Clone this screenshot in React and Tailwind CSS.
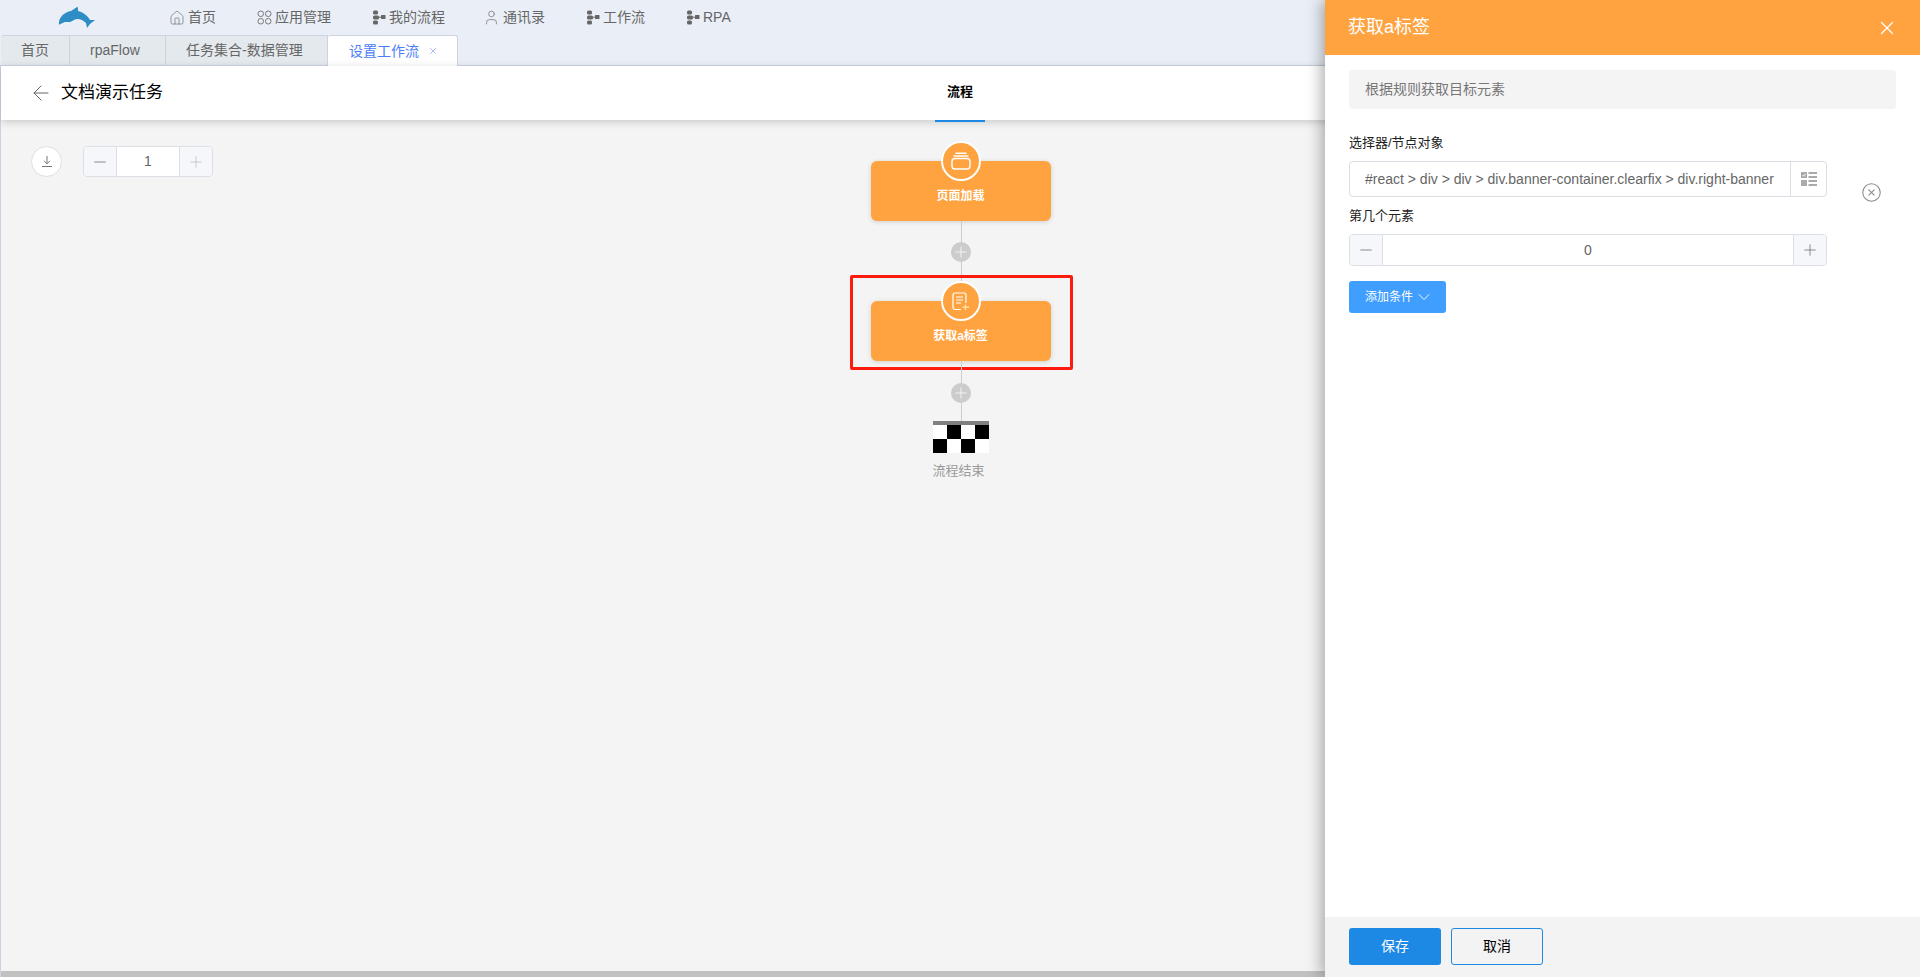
import React from "react";
import { House, User, ArrowLeft, X, Minus, Plus, CircleX, ChevronDown } from "lucide-react";

const FONT = { fontFamily: '"Liberation Sans", "Noto Sans CJK SC", sans-serif' };

function FlowIcon() {
  return (
    <svg width="14" height="15" viewBox="0 0 14 15" fill="#666">
      <rect x="1" y="0.5" width="5" height="4" rx="1.5" />
      <rect x="1" y="5.5" width="6" height="4" rx="1.5" />
      <rect x="1" y="10.5" width="5" height="4" rx="1.5" />
      <rect x="9" y="5" width="4.5" height="4" rx="0.5" />
      <path d="M7 7.2h2" stroke="#666" strokeWidth="1" fill="none" />
    </svg>
  );
}

function AppsIcon() {
  return (
    <svg width="15" height="15" viewBox="0 0 15 15" fill="none" stroke="#777" strokeWidth="1">
      <rect x="1" y="1" width="5.5" height="5.5" rx="2.6" />
      <rect x="8.5" y="1" width="5.5" height="5.5" rx="2.6" />
      <rect x="1" y="8.5" width="5.5" height="5.5" rx="2.6" />
      <rect x="8.5" y="8.5" width="5.5" height="5.5" rx="2.6" />
    </svg>
  );
}

function Dolphin() {
  return (
    <svg width="38" height="23" viewBox="0 0 38 23">
      <path d="M1 19C0 12 6 6 13 5L19 1C20 0 20 3 20 5C25 6 30 10 32 14L37 14L32 18L29 22L28 17C24 13 19 12 16 14C14 16 11 17 9 16C6 16 3 18 1 19Z" fill="#2f8dc5" />
      <path d="M1 19C4 17 7 15.5 10 16C12 16.5 14 15.5 16 14C15 16.5 13 18 9 18C6 18 3 19 1 19Z" fill="#eaf2f5" />
    </svg>
  );
}

function PageIcon() {
  return (
    <svg width="20" height="18" viewBox="0 0 20 18" fill="none" stroke="#fff" strokeWidth="1.4">
      <rect x="1" y="6.5" width="18" height="10.5" rx="3" />
      <path d="M2.5 4h15M4.5 1.2h11" />
    </svg>
  );
}

function NoteIcon() {
  return (
    <svg width="18" height="19" viewBox="0 0 18 19" fill="none" stroke="#fff" strokeWidth="1.2">
      <path d="M9 17.5H3a2 2 0 0 1-2-2V3a2 2 0 0 1 2-2h9a2 2 0 0 1 2 2v8" />
      <path d="M4 5h7M4 8h7M4 11h5" />
      <path d="M13.5 12.5v5.5M10.5 15.2h6.5" stroke="#ffe9b0" />
    </svg>
  );
}

function PickIcon() {
  return (
    <svg width="16" height="14" viewBox="0 0 16 14" fill="#aaa">
      <rect x="0" y="0" width="6" height="6" />
      <path d="M1.5 3l1.2 1.2L4.6 1.8" stroke="#fff" strokeWidth="0.9" fill="none" />
      <rect x="0" y="8" width="6" height="6" />
      <rect x="7.5" y="0" width="8.5" height="2" />
      <rect x="7.5" y="4" width="8.5" height="2" />
      <rect x="7.5" y="8" width="8.5" height="2" />
      <rect x="7.5" y="12" width="8.5" height="2" />
    </svg>
  );
}

function DownloadIcon() {
  return (
    <svg width="10" height="11" viewBox="0 0 10 11" fill="none" stroke="#777" strokeWidth="1">
      <path d="M5 0v7.5M2 4.8l3 3 3-3M0 10.5h10" />
    </svg>
  );
}

function FlowNode({ icon, title }) {
  return (
    <div className="relative w-[180px] h-[60px] bg-[#ffa340] rounded-[6px] shadow-[0_1px_5px_rgba(0,0,0,0.15)] text-center">
      <div className="absolute left-[70px] top-[-20px] w-10 h-10 rounded-full bg-[#ffa340] border-2 border-white flex items-center justify-center">
        {icon}
      </div>
      <div className="pt-[26px] text-white text-[12px] font-bold leading-[18px]">{title}</div>
    </div>
  );
}

function Connector({ className, dotClass }) {
  return (
    <div className={`relative w-px ml-px bg-[#ccc] ${className}`}>
      <div className={`absolute left-[-10px] w-5 h-5 rounded-full bg-[#ccc] flex items-center justify-center ${dotClass}`}>
        <Plus size={18} strokeWidth={1} color="#fff" />
      </div>
    </div>
  );
}

const NAV = [
  { label: "首页", icon: <House size={16} strokeWidth={1.1} color="#777" className="-ml-[2px]" /> },
  { label: "应用管理", icon: <AppsIcon /> },
  { label: "我的流程", icon: <FlowIcon /> },
  { label: "通讯录", icon: <User size={17} strokeWidth={1.1} color="#777" className="-ml-[3px]" /> },
  { label: "工作流", icon: <FlowIcon /> },
  { label: "RPA", icon: <FlowIcon /> },
];

export default function App() {
  return (
    <div style={FONT} className="relative h-screen overflow-hidden flex flex-col bg-[#f4f4f4]">
      {/* top nav */}
      <div className="h-[35px] bg-[#eaeff7] flex items-center">
        <div className="w-[171px] pl-[58px] pt-[6px] h-full">
          <Dolphin />
        </div>
        <div className="flex items-center gap-[41px] text-[14px] text-[#666]">
          {NAV.map(item => (
            <div key={item.label} className="flex items-center gap-[3px]">
              {item.icon}
              <span>{item.label}</span>
            </div>
          ))}
        </div>
      </div>

      {/* tabs */}
      <div className="h-[31px] bg-[#eaeff7] flex items-stretch border-b border-[#ccd4e3] pl-px text-[14px] text-[#666]">
        <div className="w-[69px] flex items-center pl-[20px] bg-[#e4e9ee] border-t border-r border-[#ccd4e3] rounded-tl-[3px]">首页</div>
        <div className="w-[96px] flex items-center pl-[20px] bg-[#e4e9ee] border-t border-r border-[#ccd4e3]">rpaFlow</div>
        <div className="w-[162px] flex items-center pl-[20px] bg-[#e4e9ee] border-t border-r border-[#ccd4e3]">任务集合-数据管理</div>
        <div className="w-[130px] h-[31px] flex items-center pl-[21px] gap-[9px] bg-white border-t border-r border-[#ccd4e3] rounded-t-[3px] text-[#4a7dfb]">
          设置工作流
          <X size={10} strokeWidth={1.2} />
        </div>
      </div>

      <div className="flex-1 min-h-0 flex flex-col border-l border-[#ccd4e3]">
        {/* page header */}
        <div className="relative z-10 h-[54px] shrink-0 bg-white shadow-[0_2px_8px_rgba(0,0,0,0.18)] flex items-center pl-[28px]">
          <ArrowLeft size={24} strokeWidth={1} color="#666" />
          <span className="ml-[8px] text-[17px] text-black">文档演示任务</span>
          <div className="absolute left-[934px] top-0 w-[50px] h-[56px] border-b-[2px] border-[#1e88e5] flex items-center justify-center text-[13px] font-bold text-black pb-[2px]">
            流程
          </div>
        </div>

        {/* canvas */}
        <div className="relative flex-1 min-h-0 flex flex-col items-center pt-[41px]">
          <div className="absolute left-[30px] top-[26px] flex items-center gap-[21px]">
            <div className="w-[31px] h-[31px] rounded-full bg-white border border-[#dcdfe6] flex items-center justify-center">
              <DownloadIcon />
            </div>
            <div className="w-[130px] h-[31px] flex rounded-[4px] border border-[#dcdfe6] bg-white text-[14px] text-[#666]">
              <div className="w-[33px] bg-[#f5f7fa] border-r border-[#dcdfe6] rounded-l-[4px] flex items-center justify-center">
                <Minus size={18} strokeWidth={1} color="#666" />
              </div>
              <div className="flex-1 flex items-center justify-center">1</div>
              <div className="w-[33px] bg-[#f5f7fa] border-l border-[#dcdfe6] rounded-r-[4px] flex items-center justify-center">
                <Plus size={18} strokeWidth={1} color="#bbb" />
              </div>
            </div>
          </div>

          <FlowNode icon={<PageIcon />} title="页面加载" />
          <Connector className="h-[80px]" dotClass="top-[21px]" />
          <div className="relative">
            <FlowNode icon={<NoteIcon />} title="获取a标签" />
            <div className="absolute left-[-21px] top-[-26px] w-[223px] h-[95px] border-[3px] border-[#ff1a10] rounded-[2px]" />
          </div>
          <Connector className="h-[60px]" dotClass="top-[22px]" />
          <div className="w-[56px]">
            <div className="h-[4px] bg-[#808080]" />
            <div className="grid grid-cols-4 h-[28px]">
              <div className="bg-white" />
              <div className="bg-black" />
              <div className="bg-white" />
              <div className="bg-black" />
              <div className="bg-black" />
              <div className="bg-white" />
              <div className="bg-black" />
              <div className="bg-white" />
            </div>
            <div className="mt-[9px] text-[13px] leading-[18px] text-[#999] whitespace-nowrap">流程结束</div>
          </div>
        </div>

        {/* scrollbar */}
        <div className="h-[6px] shrink-0 bg-[#c1c1c1]" />
      </div>

      {/* drawer */}
      <div className="absolute right-0 top-0 bottom-0 z-20 w-[595px] bg-white shadow-[-4px_0_14px_rgba(0,0,0,0.3)] flex flex-col">
        <div className="h-[55px] shrink-0 bg-[#ffa340] flex items-center justify-between pl-[23px] pr-[22px] text-white">
          <span className="text-[18px]">获取a标签</span>
          <X size={22} strokeWidth={1.3} />
        </div>

        <div className="flex-1 min-h-0 pl-[24px] pt-[15px]">
          <div className="w-[547px] h-[39px] bg-[#f4f4f4] rounded-[3px] flex items-center pl-[16px] text-[14px] text-[#777]">
            根据规则获取目标元素
          </div>

          <div className="mt-[25px] text-[13px] leading-[18px] text-[#222]">选择器/节点对象</div>
          <div className="relative mt-[9px]">
            <div className="w-[478px] h-[36px] flex border border-[#dcdfe6] rounded-[4px] text-[14px] text-[#666]">
              <div className="flex-1 flex items-center pl-[15px] whitespace-nowrap overflow-hidden">
                #react &gt; div &gt; div &gt; div.banner-container.clearfix &gt; div.right-banner
              </div>
              <div className="w-[36px] border-l border-[#dcdfe6] flex items-center justify-center">
                <PickIcon />
              </div>
            </div>
            <CircleX size={21} strokeWidth={1.2} color="#888" className="absolute left-[512px] top-[21px]" />
          </div>

          <div className="mt-[10px] text-[13px] leading-[18px] text-[#222]">第几个元素</div>
          <div className="mt-[9px] w-[478px] h-[32px] flex border border-[#dcdfe6] rounded-[4px] text-[14px] text-[#666]">
            <div className="w-[33px] bg-[#f5f7fa] border-r border-[#dcdfe6] rounded-l-[4px] flex items-center justify-center">
              <Minus size={18} strokeWidth={1} color="#666" />
            </div>
            <div className="flex-1 flex items-center justify-center">0</div>
            <div className="w-[33px] bg-[#f5f7fa] border-l border-[#dcdfe6] rounded-r-[4px] flex items-center justify-center">
              <Plus size={18} strokeWidth={1} color="#666" />
            </div>
          </div>

          <div className="mt-[15px] w-[97px] h-[32px] bg-[#409eff] rounded-[3px] flex items-center pl-[16px] gap-px text-[12px] text-white">
            添加条件
            <ChevronDown size={20} strokeWidth={1.1} />
          </div>
        </div>

        <div className="h-[60px] shrink-0 bg-[#f3f3f3] flex items-center gap-[10px] pl-[24px] pb-[2px] text-[14px]">
          <div className="w-[92px] h-[37px] bg-[#1e88e5] rounded-[3px] flex items-center justify-center text-white">保存</div>
          <div className="w-[92px] h-[37px] border border-[#1e88e5] rounded-[3px] flex items-center justify-center text-black">取消</div>
        </div>
      </div>
    </div>
  );
}
